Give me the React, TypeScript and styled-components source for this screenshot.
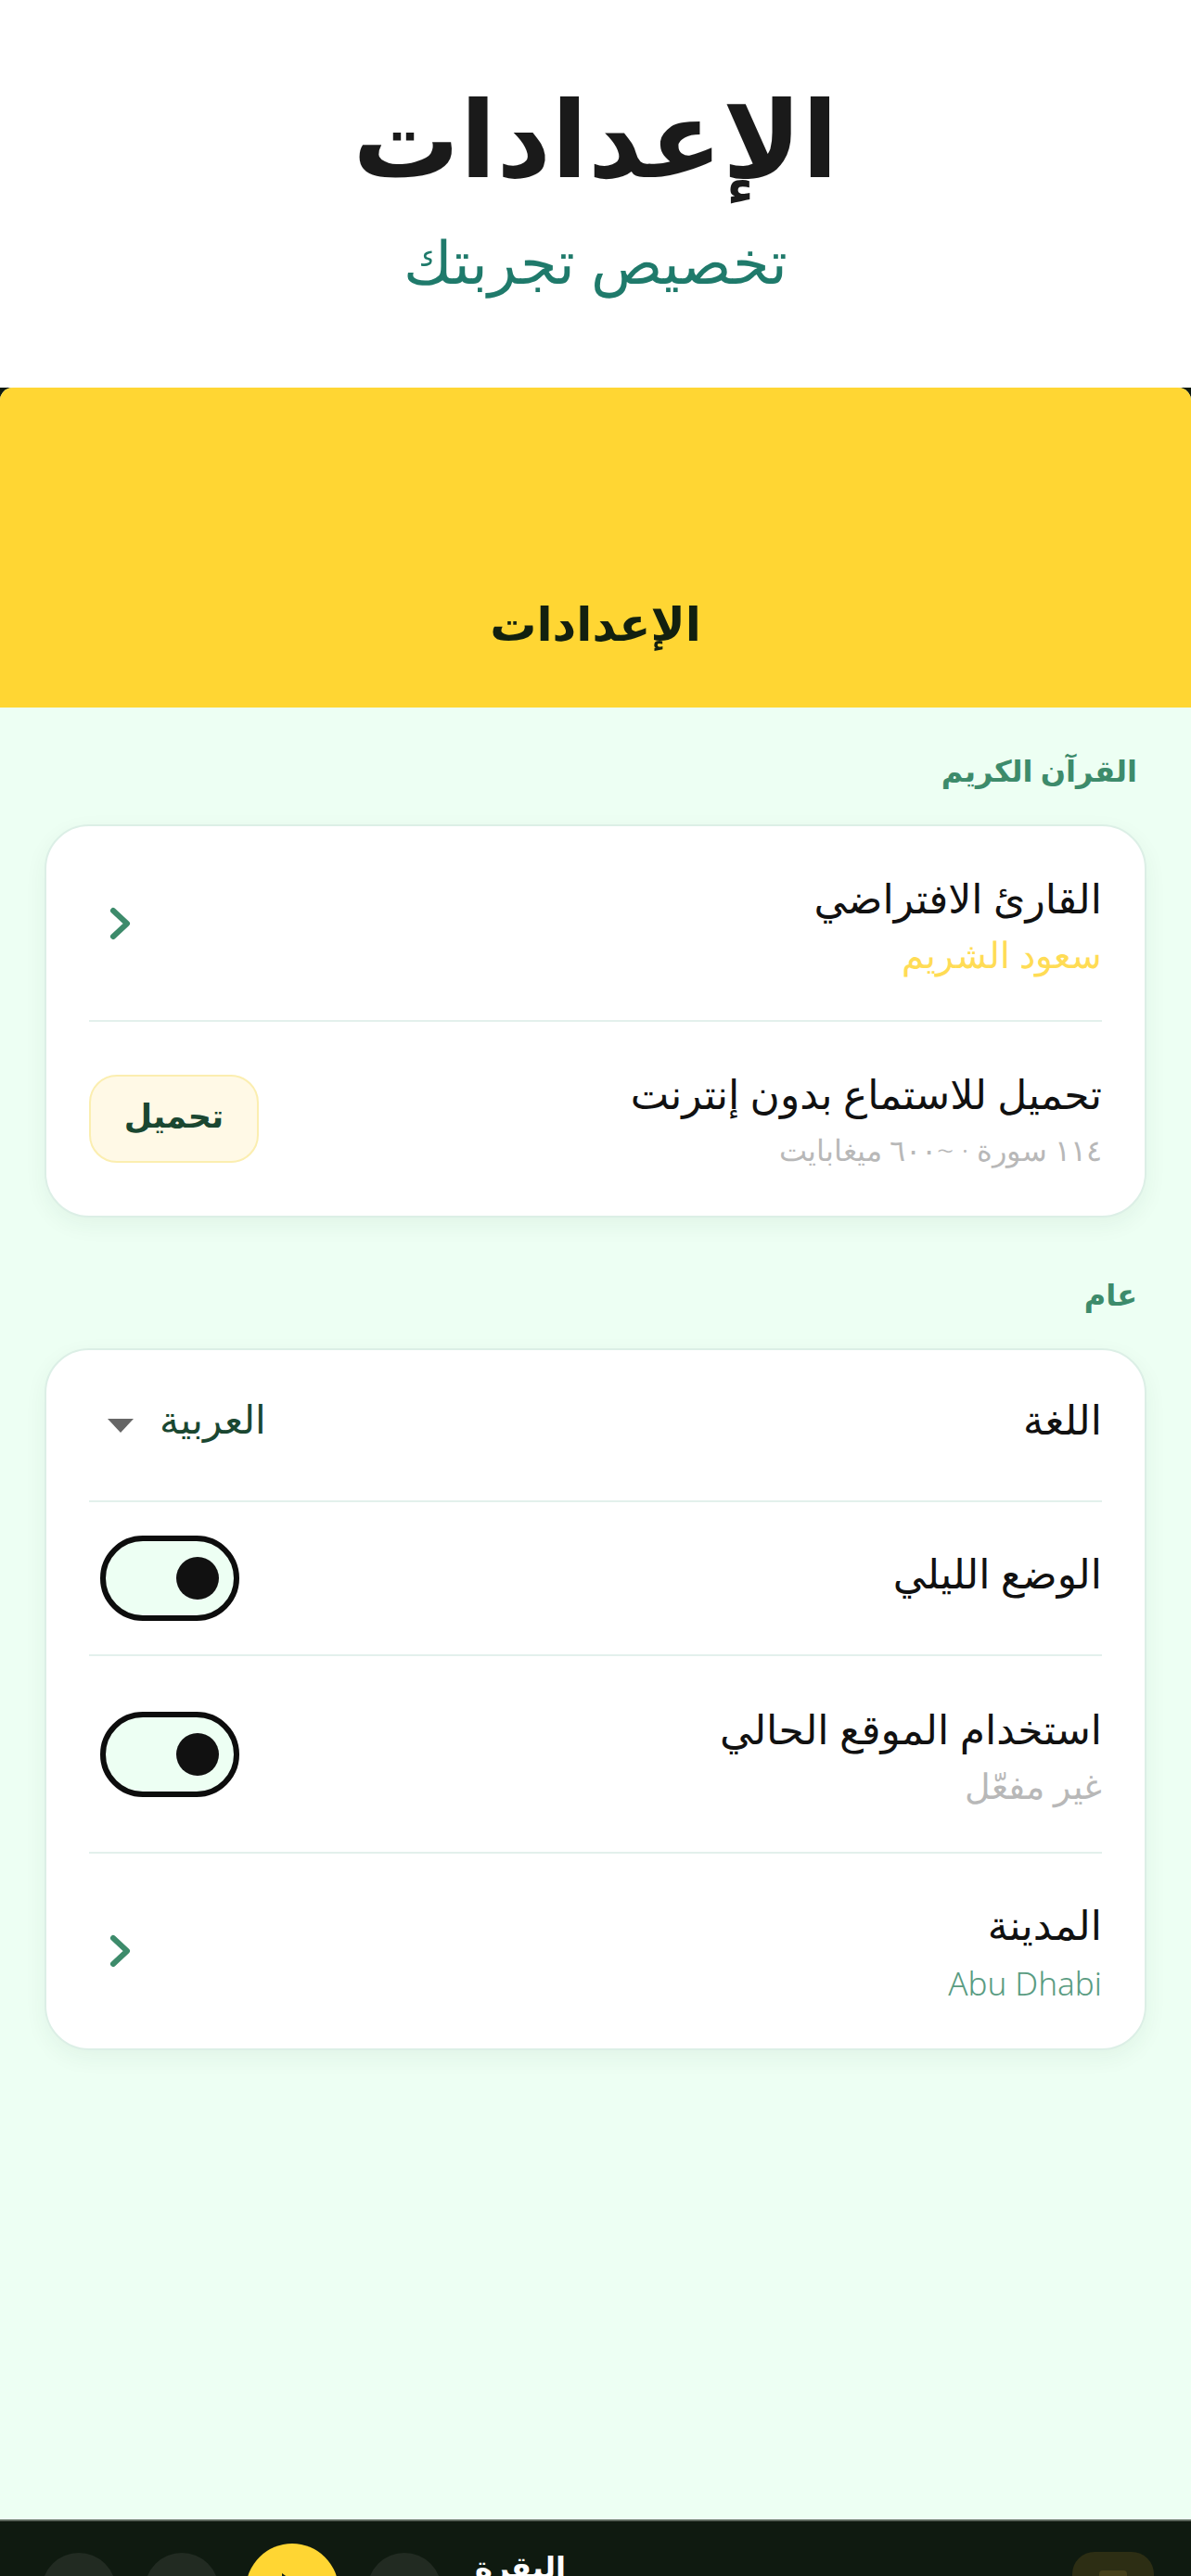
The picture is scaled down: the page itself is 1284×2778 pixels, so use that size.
import React from 'react';
import styled, { createGlobalStyle } from 'styled-components';

const Global = createGlobalStyle`
  html, body { margin: 0; padding: 0; background: #fff; }
  #root { width: 1284px; height: 2778px; }
`;

const Screen = styled.div`
  width: 1284px;
  height: 2778px;
  display: flex;
  flex-direction: column;
  overflow: hidden;
  background: #fff;
  font-family: "Noto Sans", "DejaVu Sans", sans-serif;
  direction: rtl;
`;

const Hero = styled.header`
  height: 418px;
  box-sizing: border-box;
  padding-top: 72px;
  display: flex;
  flex-direction: column;
  align-items: center;
  flex: none;
`;

const HeroTitle = styled.h1`
  margin: 0;
  font-size: 115px;
  line-height: 150px;
  font-weight: 800;
  color: #1a1a1a;
`;

const HeroSub = styled.p`
  margin: 20px 0 0;
  font-size: 64px;
  line-height: 80px;
  font-weight: 300;
  color: #1f7a6b;
`;

const Stage = styled.div`
  flex: 1;
  min-height: 0;
  display: flex;
  flex-direction: column;
  background: #0f1a10;
`;

const Sheet = styled.div`
  flex: 1;
  min-height: 0;
  display: flex;
  flex-direction: column;
  background: #edfff3;
  border-radius: 14px 14px 0 0;
  overflow: hidden;
`;

const TopBar = styled.div`
  height: 345px;
  flex: none;
  box-sizing: border-box;
  padding-bottom: 59px;
  background: #ffd633;
  display: flex;
  align-items: flex-end;
  justify-content: center;
`;

const TopBarTitle = styled.h2`
  margin: 0;
  font-size: 50px;
  line-height: 64px;
  font-weight: 700;
  color: #12200f;
`;

const Content = styled.main`
  flex: 1;
  padding: 45px 48px 0;
  display: flex;
  flex-direction: column;
`;

const SectionTitle = styled.h3`
  margin: 0 10px 0;
  height: 81px;
  font-size: 32px;
  line-height: 46px;
  font-weight: 700;
  color: #3d8b6b;
`;

const Card = styled.section`
  background: #fff;
  border: 2px solid #dcefe6;
  border-radius: 48px;
  box-shadow: 0 8px 24px rgba(26, 71, 49, 0.06);
  margin-bottom: 60px;
  padding: 0 46px;
  box-sizing: border-box;
`;

const Row = styled.div<{ $h: number }>`
  height: ${(p) => p.$h}px;
  box-sizing: border-box;
  display: flex;
  align-items: center;
  justify-content: space-between;
  border-bottom: 2px solid #e3f0ec;
  &:last-child { border-bottom: 0; }
`;

const RowText = styled.div<{ $lift?: number }>`
  display: flex;
  flex-direction: column;
  margin-bottom: ${(p) => p.$lift ?? 0}px;
`;

const RowTitle = styled.div`
  font-size: 44px;
  line-height: 60px;
  font-weight: 400;
  color: #111;
`;

const RowSub = styled.div<{ $color: string; $size: number; $gap?: number }>`
  margin-top: ${(p) => p.$gap ?? 6}px;
  font-size: ${(p) => p.$size}px;
  line-height: 50px;
  font-weight: 300;
  color: ${(p) => p.$color};
`;

const Chevron = styled.svg`
  width: 26px;
  height: 40px;
  margin-left: 20px;
  fill: none;
  stroke: #3d8b6b;
  stroke-width: 6;
  stroke-linecap: round;
  stroke-linejoin: round;
`;

const GetButton = styled.button`
  width: 183px;
  height: 95px;
  box-sizing: border-box;
  background: #fff9e6;
  border: 2px solid #fbeeb0;
  border-radius: 30px;
  font: 700 35px "Noto Sans", "DejaVu Sans", sans-serif;
  color: #1a4731;
  padding: 0 0 8px;
`;

const Picker = styled.div`
  display: flex;
  align-items: center;
  gap: 28px;
  margin-left: 20px;
  margin-bottom: 14px;
  font-size: 42px;
  line-height: 56px;
  color: #1a4731;
`;

const Caret = styled.span`
  width: 0;
  height: 0;
  margin-top: 14px;
  border-left: 14px solid transparent;
  border-right: 14px solid transparent;
  border-top: 15px solid #666;
`;

const Toggle = styled.div`
  width: 150px;
  height: 92px;
  margin-left: 12px;
  box-sizing: border-box;
  border: 6px solid #0d0d0d;
  border-radius: 46px;
  background: #edfff3;
  display: flex;
  align-items: center;
  justify-content: flex-start;
  padding-right: 16px;
`;

const Knob = styled.span`
  width: 46px;
  height: 46px;
  border-radius: 50%;
  background: #111;
`;

const Player = styled.footer`
  height: 61px;
  flex: none;
  background: #0f1a10;
  border-top: 2px solid #5c665c;
  box-sizing: border-box;
  display: flex;
  justify-content: space-between;
  padding: 0 40px 0 45px;
  overflow: hidden;
`;

const Cover = styled.div`
  width: 88px;
  height: 88px;
  margin-top: 33px;
  border-radius: 24px;
  background: #2d2e14;
  display: flex;
  justify-content: center;
`;

const CoverMark = styled.span`
  width: 30px;
  height: 20px;
  margin-top: 20px;
  border-radius: 4px 4px 0 0;
  background: #45401a;
`;

const PlayerLeft = styled.div`
  display: flex;
  direction: ltr;
  align-items: flex-start;
`;

const RoundButton = styled.div<{ $gap?: number }>`
  width: 80px;
  height: 80px;
  margin-top: 34px;
  margin-left: ${(p) => p.$gap ?? 0}px;
  border-radius: 50%;
  background: #222b22;
  flex: none;
`;

const PlayButton = styled.div`
  width: 100px;
  height: 100px;
  margin-top: 24px;
  margin-left: 29px;
  border-radius: 50%;
  background: #ffd633;
  flex: none;
  display: flex;
  justify-content: center;
`;

const Surah = styled.div`
  margin-top: 24px;
  margin-left: 36px;
  font-size: 32px;
  line-height: 50px;
  font-weight: 700;
  color: #fff;
  direction: rtl;
`;

const Tip = styled.span`
  width: 0;
  height: 0;
  margin-top: 32px;
  border-left: 22px solid #12200f;
  border-top: 16px solid transparent;
  border-bottom: 16px solid transparent;
`;

const Chev = () => (
  <Chevron viewBox="0 0 26 40"><path d="M6 6 L21 20 L6 34" /></Chevron>
);

export default function App() {
  return (
    <Screen>
      <Global />
      <Hero>
        <HeroTitle>الإعدادات</HeroTitle>
        <HeroSub>تخصيص تجربتك</HeroSub>
      </Hero>
      <Stage>
        <Sheet>
          <TopBar><TopBarTitle>الإعدادات</TopBarTitle></TopBar>
          <Content>
            <SectionTitle>القرآن الكريم</SectionTitle>
            <Card>
              <Row $h={211}>
                <RowText>
                  <RowTitle>القارئ الافتراضي</RowTitle>
                  <RowSub $color="#ffdc55" $size={39}>سعود الشريم</RowSub>
                </RowText>
                <Chev />
              </Row>
              <Row $h={209}>
                <RowText>
                  <RowTitle>تحميل للاستماع بدون إنترنت</RowTitle>
                  <RowSub $color="#b8b8b8" $size={32}>١١٤ سورة · ~٦٠٠ ميغابايت</RowSub>
                </RowText>
                <GetButton>تحميل</GetButton>
              </Row>
            </Card>
            <SectionTitle>عام</SectionTitle>
            <Card>
              <Row $h={164}>
                <RowText $lift={14}><RowTitle>اللغة</RowTitle></RowText>
                <Picker>العربية<Caret /></Picker>
              </Row>
              <Row $h={166}>
                <RowText $lift={12}><RowTitle>الوضع الليلي</RowTitle></RowText>
                <Toggle><Knob /></Toggle>
              </Row>
              <Row $h={213}>
                <RowText>
                  <RowTitle>استخدام الموقع الحالي</RowTitle>
                  <RowSub $color="#b8b8b8" $size={38}>غير مفعّل</RowSub>
                </RowText>
                <Toggle><Knob /></Toggle>
              </Row>
              <Row $h={210}>
                <RowText>
                  <RowTitle>المدينة</RowTitle>
                  <RowSub $color="#5a9c82" $size={35} $gap={9}>Abu Dhabi</RowSub>
                </RowText>
                <Chev />
              </Row>
            </Card>
          </Content>
          <Player>
            <Cover><CoverMark /></Cover>
            <PlayerLeft>
              <RoundButton />
              <RoundButton $gap={31} />
              <PlayButton><Tip /></PlayButton>
              <RoundButton $gap={31} />
              <Surah>البقرة</Surah>
            </PlayerLeft>
          </Player>
        </Sheet>
      </Stage>
    </Screen>
  );
}
